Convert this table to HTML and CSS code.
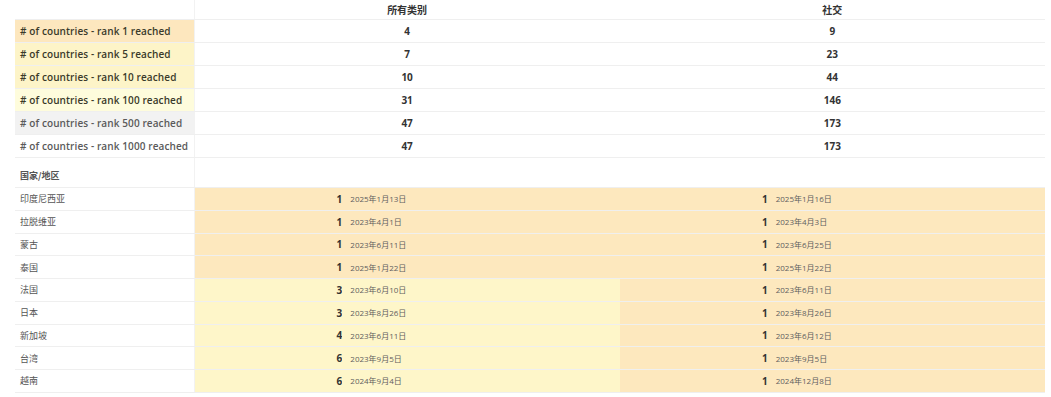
FILE: index.html
```html
<!DOCTYPE html>
<html lang="zh">
<head>
<meta charset="utf-8">
<link rel="stylesheet" href="styles.css">
</head>
<body>
<table class="grid">
  <colgroup>
    <col class="c-label">
    <col class="c-rank"><col class="c-date">
    <col class="c-rank"><col class="c-date">
  </colgroup>
  <thead>
    <tr class="head">
      <th class="label"></th>
      <th colspan="2">所有类别</th>
      <th colspan="2">社交</th>
    </tr>
  </thead>
  <tbody class="summary">
    <tr><td class="label r1">#&nbsp;of countries - rank 1 reached</td><td colspan="2">4</td><td colspan="2">9</td></tr>
    <tr><td class="label r5">#&nbsp;of countries - rank 5 reached</td><td colspan="2">7</td><td colspan="2">23</td></tr>
    <tr><td class="label r5">#&nbsp;of countries - rank 10 reached</td><td colspan="2">10</td><td colspan="2">44</td></tr>
    <tr><td class="label r100">#&nbsp;of countries - rank 100 reached</td><td colspan="2">31</td><td colspan="2">146</td></tr>
    <tr><td class="label r500">#&nbsp;of countries - rank 500 reached</td><td colspan="2">47</td><td colspan="2">173</td></tr>
    <tr><td class="label r1000">#&nbsp;of countries - rank 1000 reached</td><td colspan="2">47</td><td colspan="2">173</td></tr>
  </tbody>
  <tbody class="countries">
    <tr class="sub"><th class="label">国家/地区</th><th colspan="2"></th><th colspan="2"></th></tr>
    <tr><td class="label">印度尼西亚</td><td class="rank o">1</td><td class="date o">2025年1月13日</td><td class="rank o">1</td><td class="date o">2025年1月16日</td></tr>
    <tr><td class="label">拉脱维亚</td><td class="rank o">1</td><td class="date o">2023年4月1日</td><td class="rank o">1</td><td class="date o">2023年4月3日</td></tr>
    <tr><td class="label">蒙古</td><td class="rank o">1</td><td class="date o">2023年6月11日</td><td class="rank o">1</td><td class="date o">2023年6月25日</td></tr>
    <tr><td class="label">泰国</td><td class="rank o">1</td><td class="date o">2025年1月22日</td><td class="rank o">1</td><td class="date o">2025年1月22日</td></tr>
    <tr><td class="label">法国</td><td class="rank y">3</td><td class="date y">2023年6月10日</td><td class="rank o">1</td><td class="date o">2023年6月11日</td></tr>
    <tr><td class="label">日本</td><td class="rank y">3</td><td class="date y">2023年8月26日</td><td class="rank o">1</td><td class="date o">2023年8月26日</td></tr>
    <tr><td class="label">新加坡</td><td class="rank y">4</td><td class="date y">2023年6月11日</td><td class="rank o">1</td><td class="date o">2023年6月12日</td></tr>
    <tr><td class="label">台湾</td><td class="rank y">6</td><td class="date y">2023年9月5日</td><td class="rank o">1</td><td class="date o">2023年9月5日</td></tr>
    <tr><td class="label">越南</td><td class="rank y">6</td><td class="date y">2024年9月4日</td><td class="rank o">1</td><td class="date o">2024年12月8日</td></tr>
  </tbody>
</table>
</body>
</html>
```
FILE: styles.css
```css
html, body {
  margin: 0;
  padding: 0;
  background: #ffffff;
}
body {
  font-family: "Open Sans", "Noto Sans CJK SC", sans-serif;
  color: #333;
}
.grid {
  margin-left: 15px;
  width: 1030px;
  border-collapse: collapse;
  table-layout: fixed;
}
.c-label { width: 179px; }
.c-rank { width: 148px; }
.c-date { width: 277px; }
.grid th, .grid td {
  padding: 0;
  white-space: nowrap;
  overflow: hidden;
  border-bottom: 1px solid #efefef;
}
.head th {
  height: 19px;
  font-size: 10px;
  font-weight: 600;
  color: #333;
  text-align: center;
  vertical-align: middle;
  font-family: "Noto Sans CJK SC", sans-serif;
}
.summary td {
  height: 22px;
  font-size: 10px;
  font-weight: 700;
  text-align: center;
  color: #333;
}
.grid .label {
  text-align: left;
  padding-left: 5px;
  border-right: 1px solid #f2f2f2;
}
.summary .label {
  font-size: 10px;
  font-weight: 600;
  color: #3a3a2a;
  letter-spacing: 0.1px;
}
.r1 { background: #fde7be; }
.r5 { background: #fdf4c8; }
.r100 { background: #fefcdc; }
.summary .r500 { background: #f2f2f2; color: #5a5a5a; }
.summary .r1000 { background: #ffffff; color: #5a5a5a; }
.sub th {
  height: 24px;
  vertical-align: bottom;
  padding-bottom: 5px;
  font-size: 9.5px;
  font-weight: 700;
  color: #333;
  font-family: "Noto Sans CJK SC", sans-serif;
}
.countries td {
  height: 21.75px;
  font-size: 10px;
}
.countries .label {
  font-size: 9px;
  color: #555;
  font-family: "Noto Sans CJK SC", sans-serif;
}
.rank {
  text-align: right;
  font-weight: 700;
  color: #333;
}
.countries .date {
  text-align: left;
  padding-left: 8px;
  font-size: 8px;
  color: #5e5e5e;
}
.o { background: #fde8be; }
.y { background: #fef6c9; }
```
